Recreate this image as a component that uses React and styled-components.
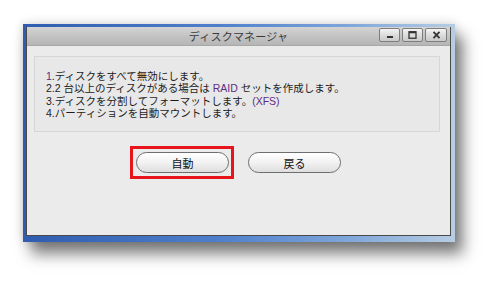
import styled, { createGlobalStyle } from "styled-components"

const Global = createGlobalStyle`
    html, body {
        margin: 0;
        padding: 0;
        background: #ffffff;
    }
    body {
        font-family: "Liberation Sans", "Noto Sans CJK JP", sans-serif;
    }
`

const Page = styled.div`
    width: 497px;
    height: 284px;
    padding: 24px 0 0 23px;
    box-sizing: border-box;
`

const Frame = styled.div`
    width: 432px;
    height: 218px;
    box-sizing: border-box;
    padding: 3px 4px 6px 3px;
    background: linear-gradient(90deg, #2f5cb0 0%, #4f7fcc 45%, #7ea6da 75%, #b7cde3 100%);
    box-shadow: 8px 12px 14px rgba(0, 0, 0, 0.5), 0 0 10px rgba(0, 0, 0, 0.18);
`

const Client = styled.div`
    height: 100%;
    display: flex;
    flex-direction: column;
    background: #ebebeb;
    border: 1px solid #4a4a4a;
    border-top: none;
    box-sizing: border-box;
`

const TitleBar = styled.div`
    height: 18px;
    position: relative;
    display: flex;
    align-items: center;
    justify-content: center;
    background: linear-gradient(180deg, #d4d4d4 0%, #c2c2c2 55%, #b6b6b6 100%);
    border-bottom: 1px solid #a8a8a8;
`

const Title = styled.div`
    font-size: 11px;
    color: #3a3a3a;
    letter-spacing: 0.2px;
`

const Controls = styled.div`
    position: absolute;
    right: 3px;
    top: 1px;
    display: flex;
    gap: 2px;
`

const CtlBtn = styled.div`
    width: ${p => p.$w}px;
    height: 14px;
    box-sizing: border-box;
    border: 1px solid #7e7e7e;
    border-radius: 2px;
    background: linear-gradient(180deg, #f4f4f4 0%, #dcdcdc 50%, #c9c9c9 100%);
    display: flex;
    align-items: center;
    justify-content: center;
`

const Panel = styled.div`
    margin: 10px 10px 0 7px;
    height: 76px;
    box-sizing: border-box;
    padding: 13px 11px;
    background: #e8e8e8;
    border: 1px solid #d6d6d6;
    font-size: 10.5px;
    line-height: 12.3px;
    color: #1c1c1c;
`

const Line = styled.div`
    white-space: nowrap;
`

const Mark = styled.span`
    color: #5b2d86;
`

const ButtonRow = styled.div`
    display: flex;
    justify-content: center;
    gap: 19px;
    margin-top: 20px;
`

const Btn = styled.div`
    position: relative;
    width: 93px;
    height: 21px;
    box-sizing: border-box;
    border: 1px solid #6e6e6e;
    border-radius: 11px;
    background: linear-gradient(180deg, #ffffff 0%, #f2f2f2 50%, #dedede 100%);
    display: flex;
    align-items: center;
    justify-content: center;
    font-size: 11px;
    color: #111;

    &::after {
        content: "";
        display: ${p => (p.$focus ? "block" : "none")};
        position: absolute;
        left: -7px;
        right: -6px;
        top: -7px;
        bottom: -7px;
        border: 3px solid #e8141c;
    }
`

export default function App() {
    return <Page>
        <Global />
        <Frame>
            <Client>
                <TitleBar>
                    <Title>ディスクマネージャ</Title>
                    <Controls>
                        <CtlBtn $w={21}>
                            <svg width="8" height="8" viewBox="0 0 8 8">
                                <rect x="1" y="5" width="6" height="2" fill="#333" />
                            </svg>
                        </CtlBtn>
                        <CtlBtn $w={21}>
                            <svg width="9" height="8" viewBox="0 0 9 8">
                                <rect x="1" y="0.75" width="7" height="6.5" fill="none" stroke="#333" strokeWidth="1.3" />
                                <rect x="1" y="0.5" width="7" height="1.8" fill="#333" />
                            </svg>
                        </CtlBtn>
                        <CtlBtn $w={22}>
                            <svg width="9" height="8" viewBox="0 0 9 8">
                                <path d="M1.5 0.8 L7.5 7.2 M7.5 0.8 L1.5 7.2" stroke="#333" strokeWidth="1.8" />
                            </svg>
                        </CtlBtn>
                    </Controls>
                </TitleBar>
                <Panel>
                    <Line><Mark>1</Mark>.ディスクをすべて無効にします。</Line>
                    <Line>2.2 台以上のディスクがある場合は <Mark>RAID</Mark> セットを作成します。</Line>
                    <Line>3.ディスクを分割してフォーマットします。<Mark>(XFS)</Mark></Line>
                    <Line>4.パーティションを自動マウントします。</Line>
                </Panel>
                <ButtonRow>
                    <Btn $focus>自動</Btn>
                    <Btn>戻る</Btn>
                </ButtonRow>
            </Client>
        </Frame>
    </Page>
}
